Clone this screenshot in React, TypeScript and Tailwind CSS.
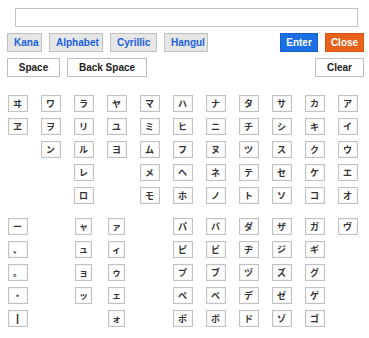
import React from 'react'

const topCols: string[][] = [
  ['ヰ', 'ヱ'],
  ['ワ', 'ヲ', 'ン'],
  ['ラ', 'リ', 'ル', 'レ', 'ロ'],
  ['ヤ', 'ユ', 'ヨ'],
  ['マ', 'ミ', 'ム', 'メ', 'モ'],
  ['ハ', 'ヒ', 'フ', 'ヘ', 'ホ'],
  ['ナ', 'ニ', 'ヌ', 'ネ', 'ノ'],
  ['タ', 'チ', 'ツ', 'テ', 'ト'],
  ['サ', 'シ', 'ス', 'セ', 'ソ'],
  ['カ', 'キ', 'ク', 'ケ', 'コ'],
  ['ア', 'イ', 'ウ', 'エ', 'オ'],
]

const bottomCols: string[][] = [
  ['ー', '、', '。', '・', '|'],
  [],
  ['ャ', 'ュ', 'ョ', 'ッ'],
  ['ァ', 'ィ', 'ゥ', 'ェ', 'ォ'],
  [],
  ['パ', 'ピ', 'プ', 'ペ', 'ポ'],
  ['バ', 'ビ', 'ブ', 'ベ', 'ボ'],
  ['ダ', 'ヂ', 'ヅ', 'デ', 'ド'],
  ['ザ', 'ジ', 'ズ', 'ゼ', 'ゾ'],
  ['ガ', 'ギ', 'グ', 'ゲ', 'ゴ'],
  ['ヴ'],
]

const small = 'ャュョッァィゥェォ'

function Key({ ch }: { ch: string }) {
  const w = small.includes(ch) ? 'w-[17px]' : 'w-[20px]'
  const bar = ch === '|'
  return (
    <button
      className={`${w} ${bar ? 'text-[11px]' : 'text-[9px]'} h-[17px] mb-[6px] flex items-center justify-center border border-[#c2c2c2] bg-white font-bold leading-none text-[#333] shadow-[inset_0_0_0_1px_#f4f4f4]`}
      style={{ fontFamily: bar ? '"Liberation Sans", sans-serif' : '"Noto Sans CJK JP", sans-serif' }}
    >
      {ch}
    </button>
  )
}

function KeyGrid({ cols }: { cols: string[][] }) {
  return (
    <div className="flex pl-px">
      {cols.map((col, i) => (
        <div key={i} className="flex w-[33px] flex-col items-center">
          {col.map(ch => <Key key={ch} ch={ch} />)}
        </div>
      ))}
    </div>
  )
}

const modeBtn = 'h-[19px] px-[6px] border border-[#c0c0c0] bg-[#e6e6e6] text-[10px] font-bold text-[#1a5fe0] leading-none'
const plainBtn = 'h-[19px] border border-[#bdbdbd] bg-white text-[10px] font-bold text-[#222] leading-none'

export default function App() {
  return (
    <div className="w-[369px] h-[338px] bg-white" style={{ fontFamily: '"Liberation Sans", Arial, sans-serif' }}>
      <div className="pt-[8px] px-[15px]">
        <input className="block w-[343px] h-[19px] border border-[#c4c4c4] bg-white outline-none" />
      </div>

      <div className="mt-[6px] flex justify-between pl-[7px] pr-[5px]">
        <div className="flex gap-[7px]">
          <button className={`${modeBtn} w-[35px]`}>Kana</button>
          <button className={`${modeBtn} w-[54px]`}>Alphabet</button>
          <button className={`${modeBtn} w-[47px]`}>Cyrillic</button>
          <button className={`${modeBtn} w-[44px]`}>Hangul</button>
        </div>
        <div className="flex gap-[7px]">
          <button className="h-[19px] w-[38px] border border-[#1560d0] bg-[#1b6fe4] text-[10px] font-bold text-white leading-none">Enter</button>
          <button className="h-[19px] w-[39px] border border-[#d85210] bg-[#e8621c] text-[10px] font-bold text-white leading-none">Close</button>
        </div>
      </div>

      <div className="mt-[6px] flex justify-between pl-[7px] pr-[5px]">
        <div className="flex gap-[7px]">
          <button className={`${plainBtn} w-[53px]`}>Space</button>
          <button className={`${plainBtn} w-[80px]`}>Back Space</button>
        </div>
        <button className={`${plainBtn} w-[49px]`}>Clear</button>
      </div>

      <div className="mt-[18px]">
        <KeyGrid cols={topCols} />
      </div>
      <div className="mt-[8px]">
        <KeyGrid cols={bottomCols} />
      </div>
    </div>
  )
}
